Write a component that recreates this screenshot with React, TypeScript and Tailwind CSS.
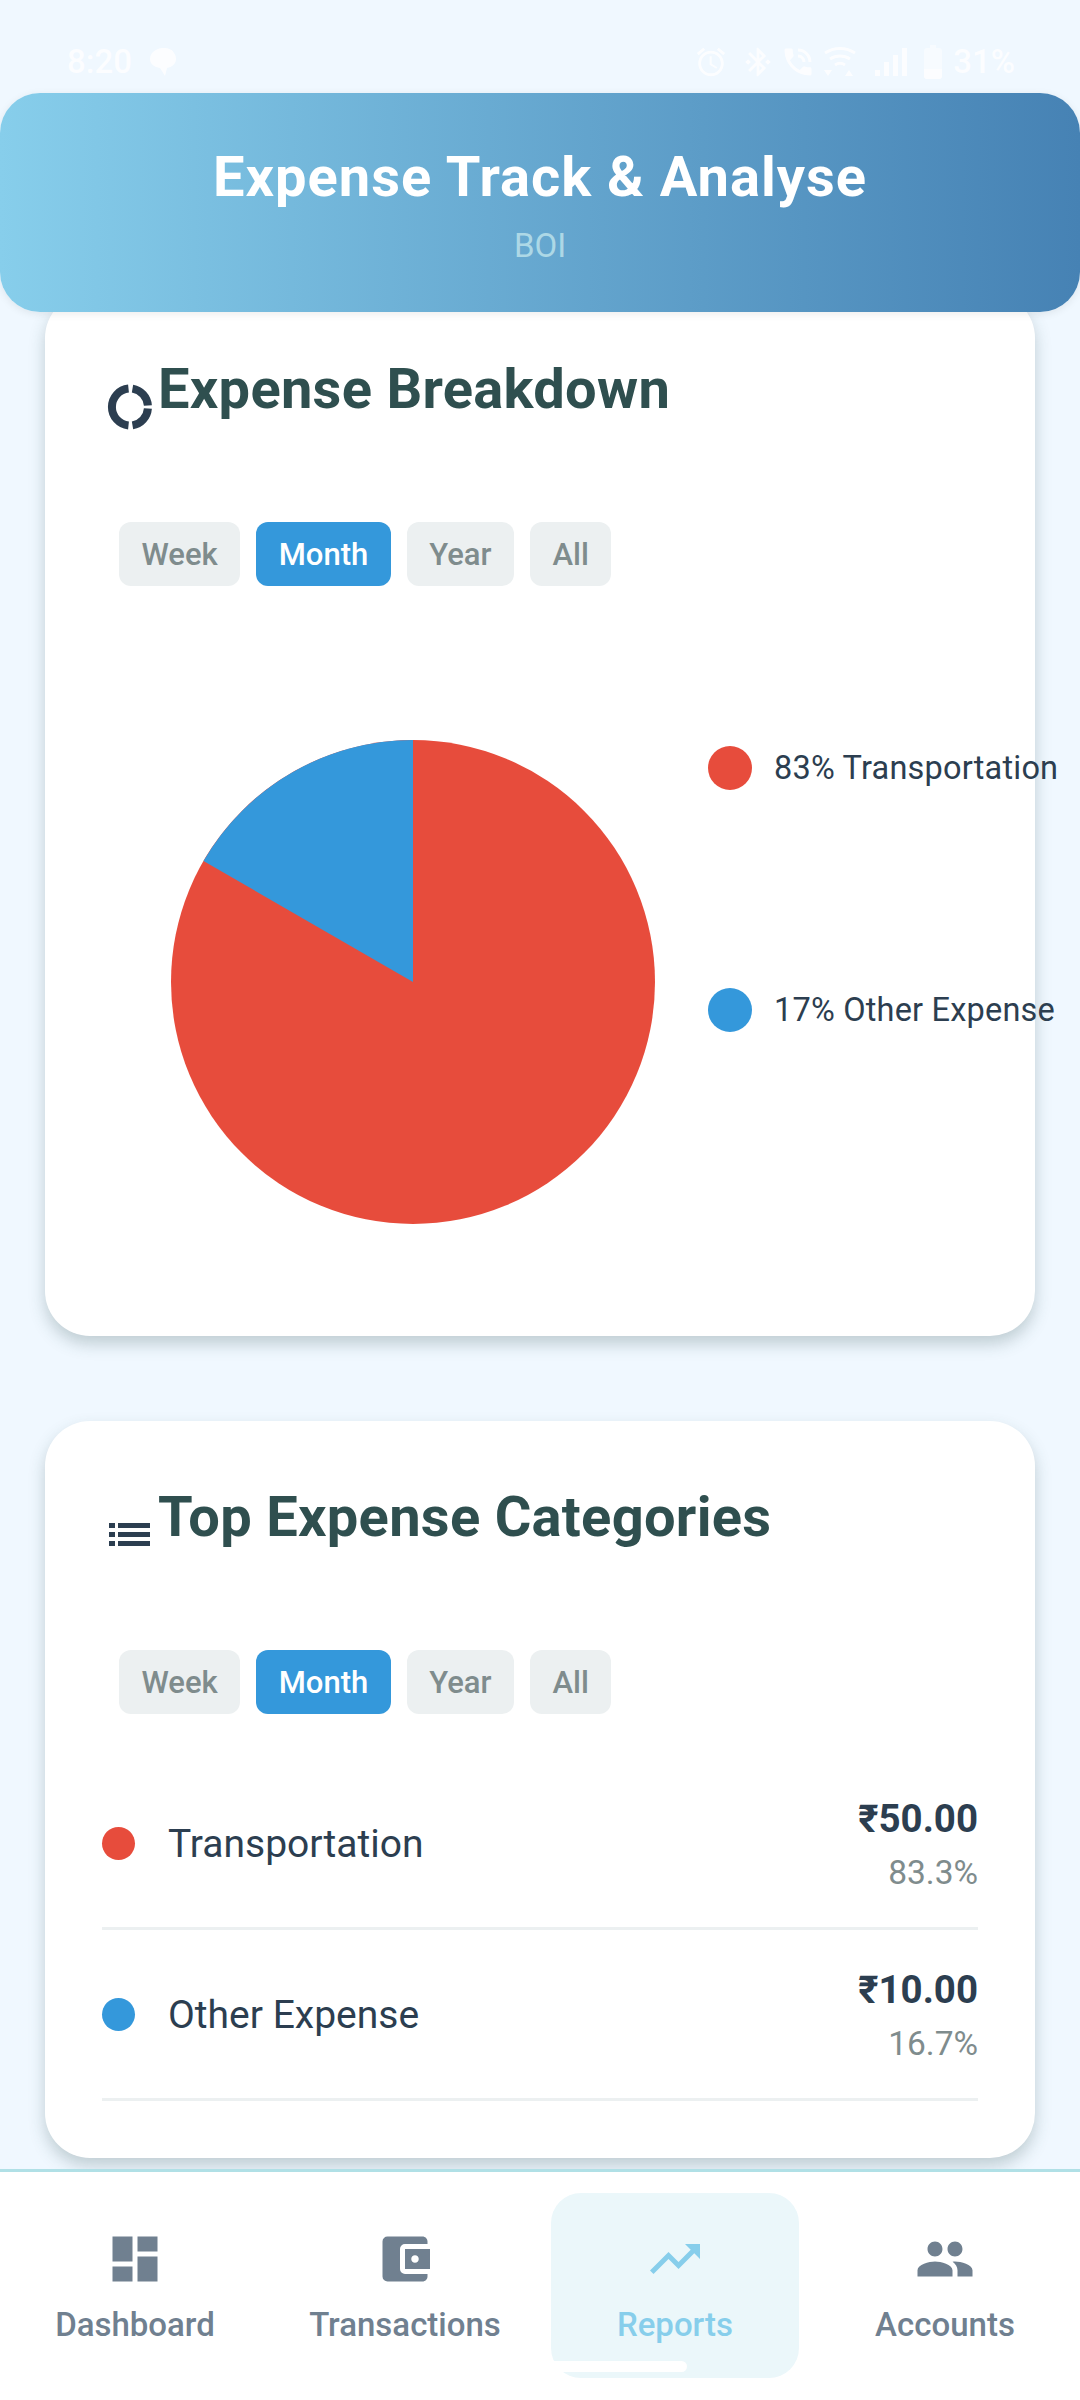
import React from "react";
import {
  MdDashboard,
  MdAccountBalanceWallet,
  MdTrendingUp,
  MdPeople,
  MdAccessAlarm,
  MdBluetoothConnected,
  MdPhoneInTalk,
} from "react-icons/md";

const ranges = ["Week", "Month", "Year", "All"];

const RangeTabs = () => (
  <div className="flex gap-[16px] ml-[74px]">
    {ranges.map((r) => (
      <div
        key={r}
        className={
          r === "Month"
            ? "h-16 px-[22.5px] pt-[3px] flex items-center rounded-xl bg-[#3498db] text-white text-[31px] font-medium"
            : "h-16 px-[22.5px] pt-[3px] flex items-center rounded-xl bg-[#ecf0f1] text-[#7f8c8d] text-[31px] font-medium"
        }
      >
        {r}
      </div>
    ))}
  </div>
);

const DonutIcon = () => (
  <svg width="50" height="50" viewBox="0 0 50 50" className="shrink-0">
    <g fill="none" stroke="#2c3e50" strokeWidth="8">
      <path d="M25.500 6.600A18.500 18.500 0 0 0 25.500 43.400" />
      <path d="M29.500 6.600A18.500 18.500 0 0 1 44.900 23.500" />
      <path d="M44.900 26.500A18.500 18.500 0 0 1 29.500 43.400" />
    </g>
  </svg>
);

const ListIcon = () => (
  <svg width="50" height="50" viewBox="0 0 50 50" className="shrink-0" fill="#2c3e50">
    <rect x="6" y="13" width="6" height="5" />
    <rect x="15" y="13" width="32" height="5" />
    <rect x="6" y="22" width="6" height="5" />
    <rect x="15" y="22" width="32" height="5" />
    <rect x="6" y="31" width="6" height="5" />
    <rect x="15" y="31" width="32" height="5" />
  </svg>
);

const CardTitle = ({ icon, title }: { icon: React.ReactNode; title: string }) => (
  <div className="flex ml-[58px] h-[64px]">
    <div className="w-[55px] pt-[25px] shrink-0">{icon}</div>
    <h2 className="text-[56px] leading-[64px] font-bold text-[#2f4f4f] tracking-[0.3px] whitespace-nowrap">{title}</h2>
  </div>
);

const CategoryRow = ({ color, name, amount, pct }: { color: string; name: string; amount: string; pct: string }) => (
  <div className="h-[171px] flex items-center justify-between border-b-[3px] border-[#ecf0f1]">
    <div className="flex items-center gap-[33px]">
      <span className={`w-[33px] h-[33px] rounded-full ${color}`} />
      <span className="text-[39px] pt-[3px] text-[#2c3e50]">{name}</span>
    </div>
    <div className="flex flex-col items-end pt-[6px]">
      <span className="text-[38.5px] leading-[54px] font-bold text-[#2c3e50]">{amount}</span>
      <span className="text-[33.5px] leading-[54px] text-[#7f8c8d]">{pct}</span>
    </div>
  </div>
);

const LegendItem = ({ color, label }: { color: string; label: string }) => (
  <div className="flex items-center gap-[22px] whitespace-nowrap">
    <span className={`w-11 h-11 rounded-full ${color}`} />
    <span className="text-[32.5px] tracking-[0.2px] text-[#2c3e50]">{label}</span>
  </div>
);

const NavItem = ({ icon, label, active }: { icon: React.ReactNode; label: string; active?: boolean }) => (
  <div
    className={
      active
        ? "relative w-[248px] h-[185px] mx-[11px] rounded-[30px] bg-[#ebf7fa] flex flex-col items-center pt-[36px] text-[#87ceeb]"
        : "w-[270px] h-[185px] flex flex-col items-center pt-[36px] text-[#708090]"
    }
  >
    {icon}
    <span className="mt-[14px] text-[33px] leading-[44px] font-medium">{label}</span>
    {active && <span className="absolute left-0 bottom-[6px] w-[136px] h-[11px] bg-white rounded-r-md" />}
  </div>
);

const StatusBar = () => (
  <div className="absolute top-0 left-0 right-0 h-[93px] z-20 flex items-start justify-between pl-[67px] pr-[65px] pt-[44px] text-white opacity-80">
    <div className="flex items-center gap-[18px]">
      <span className="text-[33px] leading-[36px] font-medium">8:20</span>
      <svg width="26" height="30" viewBox="0 0 26 30" fill="#fff">
        <path d="M13 1c6 0 10 2 11 5 1 1 2 3 2 6 0 5-4 8-9 9l-2 8-5-8c-6-1-10-4-10-9 0-3 1-5 3-7 2-2 6-4 10-4z" />
      </svg>
    </div>
    <div className="flex items-center">
      <MdAccessAlarm size={34} />
      <MdBluetoothConnected size={34} className="ml-[13px]" />
      <MdPhoneInTalk size={36} className="ml-[5px]" />
      <svg width="34" height="30" viewBox="0 0 34 30" fill="none" stroke="#fff" strokeWidth="3" className="ml-[7px]">
        <path d="M2 6c9-6 21-6 30 0M7 12c6-4 14-4 20 0M12 18c3-2 7-2 10 0" />
        <path d="M1 23h8l-4 6zM22 29l4-6 4 6z" fill="#fff" stroke="none" />
      </svg>
      <svg width="34" height="30" viewBox="0 0 34 30" fill="#fff" className="ml-[17px]">
        <rect x="1" y="23" width="5" height="6" />
        <rect x="10" y="15" width="5" height="14" />
        <rect x="19" y="8" width="5" height="21" />
        <rect x="28" y="1" width="5" height="28" />
      </svg>
      <svg width="18" height="34" viewBox="0 0 18 34" className="ml-[16px]">
        <path d="M6 0h6v3h3a3 3 0 0 1 3 3v25a3 3 0 0 1-3 3H3a3 3 0 0 1-3-3V6a3 3 0 0 1 3-3h3z" fill="#fff" fillOpacity="0.6" />
        <path d="M0 24h18v7a3 3 0 0 1-3 3H3a3 3 0 0 1-3-3z" fill="#fff" />
      </svg>
      <span className="ml-[11px] text-[33px] leading-[36px] font-medium">31%</span>
    </div>
  </div>
);

export default function App() {
  return (
    <div className="relative w-[1080px] h-[2400px] overflow-hidden flex flex-col bg-[#f0f8ff] font-['Roboto',sans-serif]">
      <StatusBar />
      <div className="relative z-10 mt-[93px] h-[219px] shrink-0 rounded-[40px] bg-gradient-to-r from-[#87ceeb] to-[#4682b4] flex flex-col items-center pt-[51px] shadow-[0_2px_8px_rgba(0,0,0,0.08)]">
        <h1 className="text-[56px] leading-[66px] font-bold text-white tracking-[1px]">Expense Track &amp; Analyse</h1>
        <span className="mt-[16px] text-[33px] leading-[40px] text-[#add8e6]">BOI</span>
      </div>

      <div className="flex-1 min-h-0 overflow-hidden px-[45px] -mt-[19px] flex flex-col gap-[85px]">
        <section className="h-[1043px] shrink-0 bg-white rounded-[45px] pt-[64px] shadow-[0_8px_16px_rgba(47,79,79,0.25)]">
          <CardTitle icon={<DonutIcon />} title="Expense Breakdown" />
          <div className="mt-[101px]">
            <RangeTabs />
          </div>
          <div className="flex mt-[154px] ml-[126px]">
            <svg width="484" height="484" viewBox="0 0 484 484" className="shrink-0">
              <circle cx="242" cy="242" r="242" fill="#e74c3c" />
              <path d="M242 242V0A242 242 0 0 0 32.500 121z" fill="#3498db" />
            </svg>
            <div className="ml-[53px] flex flex-col gap-[193px] pt-[4px]">
              <LegendItem color="bg-[#e74c3c]" label="83% Transportation" />
              <LegendItem color="bg-[#3498db]" label="17% Other Expense" />
            </div>
          </div>
        </section>

        <section className="h-[737px] shrink-0 bg-white rounded-[45px] pt-[64px] shadow-[0_8px_16px_rgba(47,79,79,0.25)]">
          <CardTitle icon={<ListIcon />} title="Top Expense Categories" />
          <div className="mt-[101px]">
            <RangeTabs />
          </div>
          <div className="mx-[57px] mt-[45px]">
            <CategoryRow color="bg-[#e74c3c]" name="Transportation" amount="₹50.00" pct="83.3%" />
            <CategoryRow color="bg-[#3498db]" name="Other Expense" amount="₹10.00" pct="16.7%" />
          </div>
        </section>
      </div>

      <nav className="relative z-10 h-[231px] shrink-0 bg-white border-t-[3px] border-[#b0e0e6] flex pt-[21px]">
        <NavItem icon={<MdDashboard size={60} />} label="Dashboard" />
        <NavItem icon={<MdAccountBalanceWallet size={60} />} label="Transactions" />
        <NavItem icon={<MdTrendingUp size={60} />} label="Reports" active />
        <NavItem icon={<MdPeople size={60} />} label="Accounts" />
      </nav>
    </div>
  );
}
